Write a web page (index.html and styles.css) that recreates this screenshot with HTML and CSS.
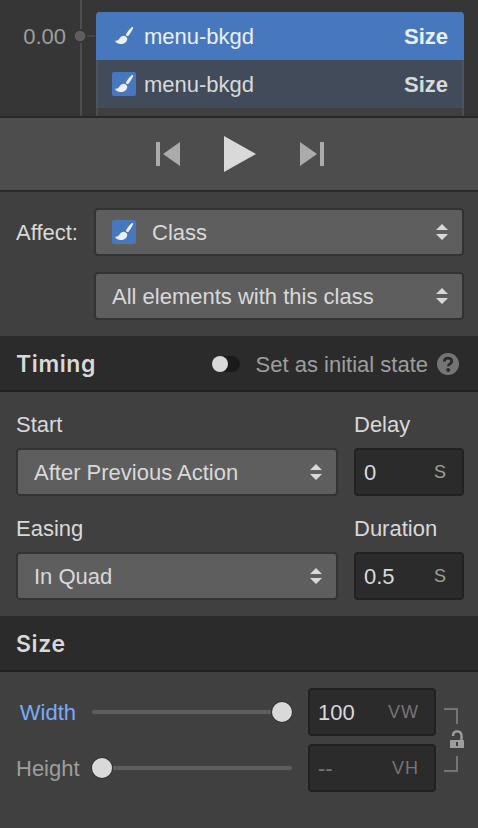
FILE: index.html
```html
<!DOCTYPE html>
<html lang="en">
<head>
    <meta charset="UTF-8">
    <meta name="viewport" content="width=device-width, initial-scale=1.0">
    <title>Interactions</title>
    <link rel="stylesheet" href="styles.css">
</head>
<body>
    <svg class="defs">
        <symbol id="brush" viewBox="0 0 24 24">
            <path d="M19.800 3.200c.8-.6 1.700.1 1.300 1-1 2.400-2.400 4.900-4.200 7.100-.7.900-1.500 1.200-2.300.5-.9-.8-.9-1.500-.2-2.400 1.600-2.300 3.400-4.600 5.400-6.200z"/>
            <path d="M12.600 11.900c1.700.3 2.800 1.600 2.600 3.300-.3 2.900-3 4.800-6.300 4.800-2.600 0-4.900-1.100-6-3.200 2.500 0 3.300-.6 4.400-2.100 1.300-1.900 3-3.200 5.300-2.800z"/>
        </symbol>
        <symbol id="arrows" viewBox="0 0 12 16">
            <path d="M6 0l6 6H0zM0 10h12l-6 6z"/>
        </symbol>
    </svg>

    <div class="timeline">
        <div class="time">0.00</div>
        <svg class="axis" width="30" height="116">
            <path d="M15 0v29M15 43v73" stroke="#4d4d4d" stroke-width="2"/>
            <path d="M21 36h8" stroke="#444" stroke-width="2"/>
            <circle cx="14" cy="36" r="5.300" fill="#5e5e5e"/>
        </svg>
        <div class="actions">
            <div class="action selected">
                <span class="icon"><svg width="24" height="24"><use href="#brush"/></svg></span>
                <span class="name">menu-bkgd</span>
                <b>Size</b>
            </div>
            <div class="action">
                <span class="icon"><svg width="24" height="24"><use href="#brush"/></svg></span>
                <span class="name">menu-bkgd</span>
                <b>Size</b>
            </div>
        </div>
    </div>

    <div class="player">
        <svg width="24" height="24" viewBox="0 0 24 24"><path d="M0 0h4v24H0zM24 0v24L7 12z"/></svg>
        <svg class="play" width="32" height="36" viewBox="0 0 32 36"><path d="M0 0l32 18L0 36z"/></svg>
        <svg width="24" height="24" viewBox="0 0 24 24"><path d="M20 0h4v24h-4zM0 0v24l17-12z"/></svg>
    </div>

    <div class="affect">
        <label>Affect:</label>
        <div class="select">
            <span class="icon"><svg width="24" height="24"><use href="#brush"/></svg></span>
            <span class="value">Class</span>
            <svg class="arrows"><use href="#arrows"/></svg>
        </div>
        <div class="select second">
            <span class="value">All elements with this class</span>
            <svg class="arrows"><use href="#arrows"/></svg>
        </div>
    </div>

    <div class="heading">
        <h2>Timing</h2>
        <span class="toggle"></span>
        <span class="toggle-label">Set as initial state</span>
        <svg class="help" width="22" height="22" viewBox="0 0 22 22">
            <circle cx="11" cy="11" r="11" fill="#757575"/>
            <path d="M7.300 8.500c0-2 1.500-3.300 3.700-3.300s3.800 1.200 3.800 3.100c0 2.700-3.500 2.500-3.500 5" fill="none" stroke="#2b2b2b" stroke-width="2.800"/>
            <circle cx="11.200" cy="17" r="1.900" fill="#2b2b2b"/>
        </svg>
    </div>

    <div class="timing">
        <div class="field">
            <label>Start</label>
            <div class="select">
                <span class="value">After Previous Action</span>
                <svg class="arrows"><use href="#arrows"/></svg>
            </div>
        </div>
        <div class="field">
            <label>Delay</label>
            <div class="input"><span>0</span><span class="unit light">S</span></div>
        </div>
        <div class="field">
            <label>Easing</label>
            <div class="select">
                <span class="value">In Quad</span>
                <svg class="arrows"><use href="#arrows"/></svg>
            </div>
        </div>
        <div class="field">
            <label>Duration</label>
            <div class="input"><span>0.5</span><span class="unit light">S</span></div>
        </div>
    </div>

    <div class="heading">
        <h2>Size</h2>
    </div>

    <div class="size">
        <div class="size-rows">
            <div class="size-row">
                <label class="changed">Width</label>
                <div class="slider end"><span class="knob"></span></div>
                <div class="input"><span>100</span><span class="unit">VW</span></div>
            </div>
            <div class="size-row">
                <label>Height</label>
                <div class="slider"><span class="knob"></span></div>
                <div class="input empty"><span>--</span><span class="unit">VH</span></div>
            </div>
        </div>
        <svg class="link" width="22" height="104" viewBox="0 0 22 104">
            <path d="M0 21h13v15M13 68v15H0" fill="none" stroke="#757575" stroke-width="2"/>
            <path d="M9 48c0-3 1.700-4.600 4.200-4.600s4.300 1.600 4.300 4.600v4" fill="none" stroke="#9e9e9e" stroke-width="2.400"/>
            <path d="M7 52h12q1 0 1 1v7H6v-7q0-1 1-1z" fill="#9e9e9e"/>
            <path d="M12 54h2v4h-2z" fill="#404040"/>
        </svg>
    </div>
</body>
</html>
```

FILE: styles.css
```css
* {
    box-sizing: border-box;
}
body {
    margin: 0;
    height: 828px;
    overflow: hidden;
    background-color: #404040;
    color: #d9d9d9;
    font-family: "Liberation Sans", Arial, sans-serif;
    font-size: 22px;
    line-height: 25px;
}
svg {
    display: block;
    flex: none;
}
.defs {
    position: absolute;
    width: 0;
    height: 0;
}
.icon {
    width: 24px;
    height: 24px;
    background-color: #4778bd;
    border-radius: 2px;
    fill: #ebf0f7;
}

/* Timeline */
.timeline {
    display: flex;
    height: 118px;
    background-color: #363636;
    border-bottom: 2px solid #292929;
}
.time {
    width: 66px;
    padding-top: 24px;
    text-align: right;
    color: #9e9e9e;
}
.actions {
    width: 368px;
    height: 104px;
    margin-top: 12px;
    background-color: #404040;
    border-radius: 4px 4px 0 0;
    box-shadow: inset 2px 0 #4d4d4d, inset -2px 0 #4d4d4d;
    overflow: hidden;
}
.action {
    display: flex;
    align-items: center;
    height: 48px;
    padding: 0 16px;
    background-color: #424b59;
    box-shadow: inset 2px 0 #4c5563, inset -2px 0 #4c5563;
}
.action.selected {
    background-color: #4778bd;
    box-shadow: none;
    color: #ebf0f7;
}
.action .name {
    flex: 1;
    margin-left: 8px;
}

/* Player */
.player {
    display: flex;
    align-items: center;
    justify-content: center;
    gap: 44px;
    height: 74px;
    padding-left: 2px;
    background-color: #4d4d4d;
    border-bottom: 2px solid #2b2b2b;
    fill: #ababab;
}
.player .play {
    fill: #d9d9d9;
}

/* Controls */
.select {
    display: flex;
    align-items: center;
    height: 48px;
    padding: 0 14px 0 16px;
    background-color: #5e5e5e;
    border: 2px solid #333;
    border-radius: 4px;
}
.select .value {
    flex: 1;
}
.select .icon + .value {
    margin-left: 16px;
}
.arrows {
    width: 12px;
    height: 16px;
    fill: #d9d9d9;
}
.input {
    display: flex;
    align-items: center;
    height: 48px;
    padding: 0 15px 0 8px;
    background-color: #2b2b2b;
    border: 2px solid #212121;
    border-radius: 4px;
}
.input.empty {
    color: #757575;
}
.unit {
    margin-left: auto;
    color: #757575;
    font-size: 18px;
    line-height: 24px;
    letter-spacing: 1px;
}
.unit.light {
    color: #9e9e9e;
}

/* Affect */
.affect {
    display: grid;
    grid-template-columns: 78px 370px;
    gap: 16px 0;
    align-items: center;
    height: 144px;
    padding: 16px 14px 16px 16px;
}
.affect .second {
    grid-column: 2;
}

/* Section headings */
.heading {
    display: flex;
    align-items: center;
    height: 56px;
    padding: 2px 19px 0 16px;
    background-color: #2b2b2b;
    border-bottom: 2px solid #212121;
}
.heading h2 {
    flex: 1;
    margin: 0;
    font-family: Inter, "Liberation Sans", sans-serif;
    font-size: 23px;
    font-weight: 600;
    letter-spacing: 0.6px;
}
.toggle {
    width: 28px;
    height: 16px;
    margin-right: 16px;
    background-color: #1a1a1a;
    border-radius: 8px;
}
.toggle::before {
    content: "";
    display: block;
    width: 16px;
    height: 16px;
    background-color: #d9d9d9;
    border-radius: 50%;
}
.toggle-label {
    color: #9e9e9e;
}
.help {
    margin-left: 9px;
}

/* Timing */
.timing {
    display: grid;
    grid-template-columns: 322px 110px;
    gap: 12px 16px;
    height: 224px;
    padding: 20px 14px 16px 16px;
}
.field label {
    display: block;
    margin-bottom: 11px;
}
.timing .field {
    height: 92px;
}

/* Size */
.size {
    display: flex;
    gap: 8px;
    padding: 16px;
}
.size-rows {
    display: flex;
    flex-direction: column;
    gap: 8px;
    width: 420px;
}
.size-row {
    display: flex;
    align-items: center;
}
.size-row label {
    width: 63px;
    margin-right: 13px;
    text-align: right;
    color: #9e9e9e;
}
.size-row label.changed {
    width: 60px;
    margin-right: 16px;
    color: #78abfa;
}
.size-row .input {
    width: 128px;
    margin-left: 16px;
}
.slider {
    display: flex;
    align-items: center;
    width: 200px;
    height: 4px;
    background-color: #5e5e5e;
    border-radius: 2px;
}
.slider.end {
    justify-content: flex-end;
}
.knob {
    flex: none;
    width: 20px;
    height: 20px;
    background-color: #d9d9d9;
    border-radius: 50%;
    box-shadow: 0 0 0 1px #333;
}
```
